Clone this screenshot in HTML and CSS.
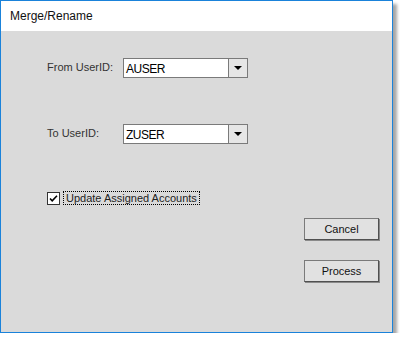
FILE: index.html
```html
<!DOCTYPE html>
<html lang="en">
<head>
  <meta charset="UTF-8" />
  <title>Merge/Rename</title>
  <link rel="stylesheet" href="styles.css">
</head>
<body>
  <div class="window">
    <div class="titlebar">Merge/Rename</div>
    <div class="content">
      <div class="row">
        <label class="field-label">From UserID:</label>
        <div class="combo">
          <span class="combo-value">AUSER</span>
          <span class="combo-btn"><span class="arrow"></span></span>
        </div>
      </div>

      <div class="row row-gap">
        <label class="field-label">To UserID:</label>
        <div class="combo">
          <span class="combo-value">ZUSER</span>
          <span class="combo-btn"><span class="arrow"></span></span>
        </div>
      </div>

      <div class="check-row">
        <span class="checkbox">
          <svg width="11" height="11" viewBox="0 0 11 11">
            <path d="M2 5.5 L4.2 7.8 L9 2.8" fill="none" stroke="#000" stroke-width="1.6" />
          </svg>
        </span>
        <span class="check-label">Update Assigned Accounts</span>
      </div>

      <div class="actions">
        <button class="btn">Cancel</button>
        <button class="btn btn-process">Process</button>
      </div>
    </div>
  </div>
</body>
</html>
```

FILE: styles.css
```css
body {
  margin: 0;
  background: #fff;
  font-family: "Liberation Sans", Arial, sans-serif;
}
.window {
  width: 391px;
  height: 331px;
  border: 1px solid #1a82da;
  background: #dadada;
  box-shadow: 4px 4px 3px rgba(0,0,0,0.35);
  display: flex;
  flex-direction: column;
}
.titlebar {
  height: 30px;
  background: #fff;
  font-size: 12px;
  color: #111;
  padding-left: 9px;
  line-height: 31px;
}
.content {
  flex: 1;
  padding: 27px 13px 0 46px;
}
.row {
  display: flex;
  align-items: center;
  height: 20px;
}
.row-gap {
  margin-top: 46px;
}
.field-label {
  width: 76px;
  font-size: 11px;
  color: #333;
  margin-top: -3px;
}
.combo {
  width: 123px;
  height: 18px;
  border: 1px solid #7a7a7a;
  background: #fff;
  display: flex;
}
.combo-value {
  flex: 1;
  font-size: 12px;
  letter-spacing: -0.5px;
  line-height: 20px;
  padding-left: 2px;
  color: #000;
}
.combo-btn {
  width: 18px;
  border-left: 1px solid #7a7a7a;
  background: #e6e6e6;
  display: flex;
  align-items: center;
  justify-content: center;
}
.arrow {
  width: 0;
  height: 0;
  border-left: 4px solid transparent;
  border-right: 4px solid transparent;
  border-top: 4px solid #000;
}
.check-row {
  display: flex;
  align-items: center;
  margin-top: 47px;
  height: 14px;
}
.checkbox {
  width: 11px;
  height: 11px;
  border: 1px solid #333;
  background: #fff;
  display: flex;
}
.check-label {
  margin-left: 4px;
  font-size: 11px;
  color: #222;
  padding: 0 2px;
  line-height: 12px;
  outline: 1px dotted #000;
}
.actions {
  display: flex;
  flex-direction: column;
  align-items: flex-end;
  gap: 20px;
  margin-top: 13px;
}
.btn {
  width: 75px;
  height: 22px;
  background: #e1e1e1;
  border: 1px solid #7a7a7a;
  border-right-color: #505050;
  border-bottom-color: #505050;
  box-shadow: 1px 1px 0 #8a8a8a;
  font-family: "Liberation Sans", Arial, sans-serif;
  font-size: 11px;
  color: #111;
  padding: 0;
}
```
